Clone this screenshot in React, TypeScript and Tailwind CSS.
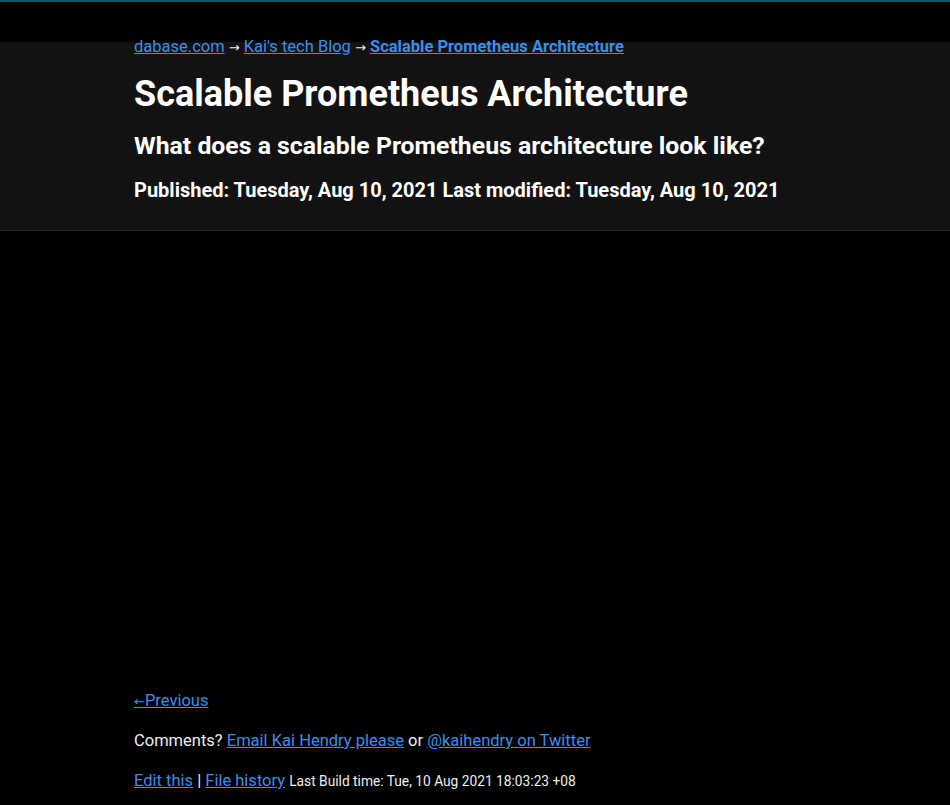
import React from "react";

const link = "text-[#3b8eea] underline";
const arrow = "font-['DejaVu_Sans',sans-serif] text-[13px] leading-none";

export default function App() {
  return (
    <div
      className="min-h-screen w-full bg-black text-[#eeeeee] border-t-2 border-[#0b5868]"
      style={{ fontFamily: "Roboto, 'Noto Sans', sans-serif" }}
    >
      <div className="h-[40px]" />

      {/* header band */}
      <header className="flow-root bg-[#121212] border-b border-[#2a2a2a] h-[189px]">
        <div className="mx-auto w-[682px]">
          <nav className="-mt-[7px] text-[16.5px] leading-[24px]">
            <a className={link} href="#">dabase.com</a>{" "}
            <span className={arrow}>→</span>{" "}
            <a className={link} href="#">Kai's tech Blog</a>{" "}
            <span className={arrow}>→</span>{" "}
            <a className={`${link} font-bold`} href="#">Scalable Prometheus Architecture</a>
          </nav>
          <h1 className="mt-[13px] text-[36px] leading-[44px] font-bold text-white">
            Scalable Prometheus Architecture
          </h1>
          <h2 className="mt-[15px] text-[24.8px] leading-[30px] font-bold text-white">
            What does a scalable Prometheus architecture look like?
          </h2>
          <p className="mt-[16px] text-[20px] leading-[26px] font-bold text-white">
            Published: Tuesday, Aug 10, 2021 Last modified: Tuesday, Aug 10, 2021
          </p>
        </div>
      </header>

      {/* article body (image area) */}
      <main className="h-[458px]" />

      <footer className="mx-auto w-[682px] text-[16.5px] leading-[24px]">
        <p>
          <a className={link} href="#">
            <span className={arrow}>←</span>Previous
          </a>
        </p>
        <p className="mt-[16px]">
          Comments? <a className={link} href="#">Email Kai Hendry please</a> or{" "}
          <a className={link} href="#">@kaihendry on Twitter</a>
        </p>
        <p className="mt-[16px]">
          <a className={link} href="#">Edit this</a> |{" "}
          <a className={link} href="#">File history</a>{" "}
          <span className="text-[13.75px]">Last Build time: Tue, 10 Aug 2021 18:03:23 +08</span>
        </p>
      </footer>
    </div>
  );
}
